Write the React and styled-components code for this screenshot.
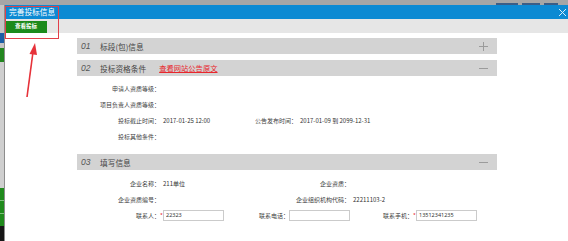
import React from 'react'
import styled, { createGlobalStyle } from 'styled-components'

const GlobalStyle = createGlobalStyle`
  html, body {
    margin: 0;
    padding: 0;
    background: #ffffff;
  }
  body {
    font-family: "Noto Sans CJK SC", "Noto Sans", sans-serif;
  }
`

const sideSegments = [
  { h: 28, c: '#c4c4c4' },
  { h: 10, c: '#1b5ea6' },
  { h: 5, c: '#c4c4c4' },
  { h: 14, c: '#22861f' },
  { h: 126, c: '#cfcfcf' },
  { h: 12, c: '#1f8a1c' },
  { h: 1, c: '#7fbf7d' },
  { h: 12, c: '#1f8a1c' },
  { h: 1, c: '#7fbf7d' },
  { h: 12, c: '#1f8a1c' },
  { h: 20, c: '#161616' },
]

const Toggle = ({ open }) => (
  <ToggleIcon width="9" height="9" viewBox="0 0 9 9">
    <line x1="0" y1="4.5" x2="9" y2="4.5" stroke="#9b9b9b" strokeWidth="1" />
    {!open && <line x1="4.5" y1="0" x2="4.5" y2="9" stroke="#9b9b9b" strokeWidth="1" />}
  </ToggleIcon>
)

const SectionHeader = ({ num, title, link, open }) => (
  <Header>
    <Num>{num}</Num>
    <HeaderText>{title}</HeaderText>
    {link && <HeaderLink href="#">{link}</HeaderLink>}
    <Toggle open={open} />
  </Header>
)

const Field = ({ value, required }) => (
  <Cell>
    {required && <Star>*</Star>}
    <Input readOnly value={value} />
  </Cell>
)

const App = () => {
  return (
    <Screen>
      <GlobalStyle />
      <TopStrip>
        <TaskBit $w={22} />
        <TaskBit $w={18} />
        <TaskBit $w={14} />
      </TopStrip>
      <Main>
        <SideStrip>
          {sideSegments.map((s, i) => (
            <Segment key={i} $h={s.h} $c={s.c} />
          ))}
        </SideStrip>
        <Dialog>
          <TitleBar>
            <Title>完善投标信息</Title>
            <svg width="7" height="7" viewBox="0 0 7 7">
              <line x1="0" y1="0" x2="7" y2="7" stroke="#d6eefb" strokeWidth="1" />
              <line x1="7" y1="0" x2="0" y2="7" stroke="#d6eefb" strokeWidth="1" />
            </svg>
          </TitleBar>
          <Toolbar>
            <GreenButton>查看投标</GreenButton>
          </Toolbar>
          <Body>
            <Section $after={6}>
              <SectionHeader num="01" title="标段(包)信息" />
            </Section>

            <Section>
              <SectionHeader num="02" title="投标资格条件" link="查看网站公告原文" open />
              <Rows $top={4} $bottom={10}>
                <Row $cols="83px 1fr">
                  <Label>申请人资质等级：</Label>
                  <Value />
                </Row>
                <Row $cols="83px 1fr">
                  <Label>项目负责人资质等级：</Label>
                  <Value />
                </Row>
                <Row $cols="83px 57px 80px 1fr">
                  <Label>投标截止时间：</Label>
                  <Value>2017-01-25 12:00</Value>
                  <Label>公告发布时间：</Label>
                  <Value>2017-01-09 到 2099-12-31</Value>
                </Row>
                <Row $cols="83px 1fr">
                  <Label>投标其他条件：</Label>
                  <Value />
                </Row>
              </Rows>
            </Section>

            <Section>
              <SectionHeader num="03" title="填写信息" open />
              <Rows $top={5} $bottom={0}>
                <Row $cols="83px 110px 80px 1fr">
                  <Label>企业名称：</Label>
                  <Value>211单位</Value>
                  <Label>企业资质：</Label>
                  <Value />
                </Row>
                <Row $cols="83px 110px 80px 1fr">
                  <Label>企业资质编号：</Label>
                  <Value />
                  <Label>企业组织机构代码：</Label>
                  <Value>22211103-2</Value>
                </Row>
                <Row $cols="83px 69px 60px 64px 60px 1fr">
                  <Label>联系人：</Label>
                  <Field value="22323" required />
                  <Label>联系电话：</Label>
                  <Field value="" />
                  <Label>联系手机：</Label>
                  <Field value="13512341235" required />
                </Row>
              </Rows>
            </Section>
          </Body>
        </Dialog>
      </Main>

      <Callout />
      <Arrow width="60" height="110" viewBox="0 0 60 110">
        <line x1="27" y1="97" x2="33" y2="52" stroke="#e6323a" strokeWidth="1.6" />
        <polygon points="35,43 29.5,54 37,55" fill="#e6323a" />
      </Arrow>
    </Screen>
  )
}

export default App

const Screen = styled.div`
  position: relative;
  width: 568px;
  height: 241px;
  overflow: hidden;
  display: flex;
  flex-direction: column;
  background: #ffffff;
`

const TopStrip = styled.div`
  height: 5px;
  background: #a6a6a6;
  display: flex;
  justify-content: flex-end;
  align-items: flex-end;
  gap: 4px;
  padding-right: 10px;
`

const TaskBit = styled.div`
  width: ${(p) => p.$w}px;
  height: 2px;
  background: #3b5d86;
`

const Main = styled.div`
  flex: 1;
  display: flex;
  min-height: 0;
`

const SideStrip = styled.div`
  width: 4px;
  display: flex;
  flex-direction: column;
`

const Segment = styled.div`
  height: ${(p) => p.$h}px;
  flex-shrink: 0;
  background: ${(p) => p.$c};
`

const Dialog = styled.div`
  flex: 1;
  display: flex;
  flex-direction: column;
  border-left: 1px solid #8d8d8d;
  background: #ffffff;
`

const TitleBar = styled.div`
  height: 14px;
  background: #0c8ad3;
  display: flex;
  align-items: center;
  justify-content: space-between;
  padding: 0 2px 0 4px;
`

const Title = styled.span`
  font-size: 7.7px;
  line-height: 1;
  color: #ffffff;
`

const Toolbar = styled.div`
  height: 14px;
  background: #e6e6e6;
  display: flex;
  align-items: flex-end;
`

const GreenButton = styled.button`
  width: 42px;
  height: 12px;
  border: none;
  padding: 0;
  background: #1c8a1b;
  color: #ffffff;
  font-family: "Noto Sans CJK SC", sans-serif;
  font-size: 5.5px;
  font-weight: bold;
  line-height: 1;
`

const Body = styled.div`
  padding: 5px 0 0 72px;
  width: 420px;
`

const Section = styled.div`
  margin-bottom: ${(p) => p.$after || 0}px;
`

const Header = styled.div`
  height: 16px;
  background: #d3d3d3;
  display: flex;
  align-items: center;
  padding-left: 4px;
`

const Num = styled.span`
  width: 19px;
  font-family: "Liberation Sans", sans-serif;
  font-style: italic;
  font-size: 8.5px;
  color: #555555;
`

const HeaderText = styled.span`
  font-size: 7.7px;
  color: #444444;
`

const HeaderLink = styled.a`
  margin-left: 13px;
  font-size: 7.3px;
  color: #e8262c;
  text-decoration: underline;
`

const ToggleIcon = styled.svg`
  margin-left: auto;
  margin-right: 9px;
`

const Rows = styled.div`
  padding: ${(p) => p.$top}px 0 ${(p) => p.$bottom}px;
`

const Row = styled.div`
  display: grid;
  grid-template-columns: ${(p) => p.$cols};
  height: 16px;
  align-items: center;
`

const Label = styled.span`
  text-align: right;
  font-size: 6px;
  color: #3f3f3f;
  white-space: nowrap;
`

const Value = styled.span`
  padding-left: 3px;
  font-size: 6px;
  color: #333333;
  white-space: nowrap;
`

const Cell = styled.div`
  display: flex;
  align-items: center;
`

const Star = styled.span`
  width: 3px;
  font-size: 6px;
  color: #e8262c;
`

const Input = styled.input`
  box-sizing: border-box;
  width: 61px;
  height: 11px;
  margin: 0;
  padding: 0 2px;
  border: 1px solid #cbcbcb;
  font-family: "Noto Sans", sans-serif;
  font-size: 5.5px;
  color: #333333;
  outline: none;
`

const Callout = styled.div`
  position: absolute;
  left: 5px;
  top: 6px;
  width: 54px;
  height: 33px;
  box-sizing: border-box;
  border: 1.5px solid #e2404a;
  pointer-events: none;
`

const Arrow = styled.svg`
  position: absolute;
  left: 0;
  top: 0;
  pointer-events: none;
`
